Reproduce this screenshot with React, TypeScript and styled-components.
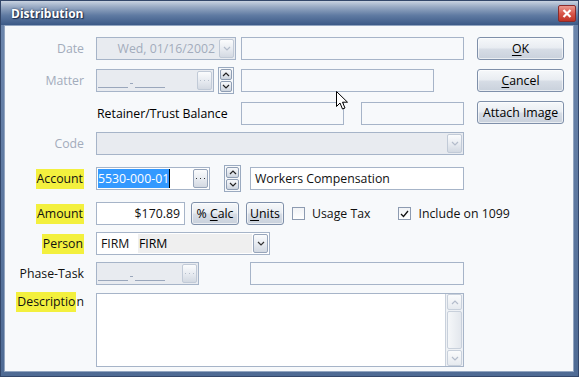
import styled, { createGlobalStyle } from "styled-components";

const GlobalStyle = createGlobalStyle`
  html, body {
    margin: 0;
    padding: 0;
    background: #ffffff;
  }
  body {
    font-family: "Open Sans", "Noto Sans", sans-serif;
    font-size: 12.3px;
    color: #000;
  }
`;

const Window = styled.div`
  position: relative;
  width: 579px;
  height: 377px;
  box-sizing: border-box;
  display: flex;
  flex-direction: column;
  background: linear-gradient(180deg, #6d87ad, #4f6b94);
  border: 1px solid #33476a;
  overflow: hidden;
`;

const TitleBar = styled.div`
  height: 24px;
  flex: none;
  display: flex;
  align-items: center;
  justify-content: space-between;
  padding: 0 2px 0 10px;
  background: linear-gradient(180deg, #c9d3e1 0%, #97a9c3 25%, #5f7aa2 60%, #3c5a87 100%);
`;

const Title = styled.span`
  font-weight: bold;
  font-size: 12px;
  color: #fff;
  text-shadow: 0 0 2px #1c2f4f, 1px 1px 1px #1c2f4f;
`;

const CloseBox = styled.div`
  width: 18px;
  height: 17px;
  box-sizing: border-box;
  margin-top: 1px;
  border: 1px solid #8a2b2b;
  border-radius: 2px;
  background: linear-gradient(180deg, #eb9a90 0%, #d8574b 50%, #bf3326 100%);
  display: flex;
  align-items: center;
  justify-content: center;
`;

const Client = styled.div`
  flex: 1;
  margin: 0 4px 4px 3px;
  border: 1px solid #92a5c0;
  background: #f7f9fb;
  display: flex;
  padding-top: 11px;
`;

const Form = styled.div`
  width: 459px;
  display: flex;
  flex-direction: column;
`;

const Row = styled.div<{ $mt?: number; $h?: number }>`
  display: flex;
  align-items: center;
  height: ${(p) => p.$h ?? 23}px;
  margin-top: ${(p) => p.$mt ?? 0}px;
`;

const TopRow = styled(Row)`
  align-items: flex-start;
`;

const Label = styled.div<{ $off?: boolean }>`
  width: 79px;
  flex: none;
  margin-right: 12px;
  text-align: right;
  white-space: nowrap;
  color: ${(p) => (p.$off ? "#a3acbc" : "#111")};
`;

const Mark = styled.span`
  background: #f3f03e;
  padding: 1px 1px 2px;
`;

const Caption = styled.span`
  margin-left: 1px;
  width: 144px;
  white-space: nowrap;
`;

type Look = "off" | "plain" | "white";

const Field = styled.div<{ $w: number; $ml?: number; $look?: Look; $h?: number }>`
  width: ${(p) => p.$w}px;
  height: ${(p) => p.$h ?? 23}px;
  margin-left: ${(p) => p.$ml ?? 0}px;
  flex: none;
  box-sizing: border-box;
  border: 1px solid #a6b4c8;
  background: ${(p) =>
    p.$look === "off" ? "#e8ebf0" : p.$look === "white" ? "#ffffff" : "#f7f9fb"};
  display: flex;
  align-items: center;
  position: relative;
  overflow: hidden;
`;

const FieldText = styled.span<{ $right?: boolean; $off?: boolean; $w?: number }>`
  flex: ${(p) => (p.$w ? "none" : "1")};
  width: ${(p) => (p.$w ? `${p.$w}px` : "auto")};
  box-sizing: border-box;
  padding: 0 4px;
  white-space: nowrap;
  text-align: ${(p) => (p.$right ? "right" : "left")};
  color: ${(p) => (p.$off ? "#a3acbc" : "#111")};
`;

// "_____-_____" placeholder of a masked code field
const Blank = styled.span`
  flex: 1;
  display: flex;
  align-items: flex-end;
  gap: 2px;
  padding: 0 0 3px 1px;
  align-self: stretch;
  box-sizing: border-box;
`;

const BlankLine = styled.span`
  flex: none;
  width: 30px;
  border-bottom: 1px solid #9aa7bc;
`;

const BlankDash = styled.span`
  flex: none;
  width: 3px;
  margin-bottom: 4px;
  border-bottom: 1px solid #9aa7bc;
`;

const Selected = styled.span`
  margin-left: 1px;
  padding: 1px 0;
  background: #3399ff;
  color: #fff;
  border-right: 1px solid #000;
`;

const MiniBtn = styled.div<{ $off?: boolean }>`
  width: 15px;
  height: 19px;
  flex: none;
  margin: 0 1px 0 auto;
  box-sizing: border-box;
  border: 1px solid ${(p) => (p.$off ? "#c1cad7" : "#97a5ba")};
  border-radius: 2px;
  background: linear-gradient(180deg, #fbfcfd 0%, #e6eaf0 55%, #d3d9e2 100%);
  display: flex;
  align-items: center;
  justify-content: center;
`;

const GreyPart = styled.div`
  flex: 1;
  align-self: stretch;
  margin: 1px 1px 1px 0;
  background: #efefef;
  display: flex;
  align-items: center;
  padding-left: 1px;
`;

const Spin = styled.div<{ $w: number; $ml: number }>`
  width: ${(p) => p.$w}px;
  height: 27px;
  margin-left: ${(p) => p.$ml}px;
  flex: none;
  box-sizing: border-box;
  border: 1px solid #9aaac0;
  padding: 1px;
  display: flex;
  flex-direction: column;
  gap: 1px;
`;

const SpinBtn = styled.div`
  flex: 1;
  border: 1px solid #8e9db3;
  border-radius: 2px;
  background: linear-gradient(180deg, #f8f9fb 0%, #dfe4eb 60%, #cdd4de 100%);
  display: flex;
  align-items: center;
  justify-content: center;
`;

const Btn = styled.div<{ $w: number; $ml?: number }>`
  width: ${(p) => p.$w}px;
  height: 23px;
  margin-left: ${(p) => p.$ml ?? 0}px;
  flex: none;
  box-sizing: border-box;
  border: 1px solid #7f90aa;
  border-radius: 3px;
  background: linear-gradient(180deg, #f6f8fa 0%, #e9edf2 45%, #d6dce5 55%, #c9d1dc 100%);
  box-shadow: inset 0 0 0 1px rgba(255, 255, 255, 0.6);
  display: flex;
  align-items: center;
  justify-content: center;
  color: #000;
  white-space: nowrap;
  u {
    text-decoration-thickness: 1px;
    text-underline-offset: 2px;
  }
`;

const Side = styled.div`
  margin-left: 13px;
  display: flex;
  flex-direction: column;
  gap: 9px;
`;

const Check = styled.label<{ $ml: number }>`
  display: flex;
  align-items: center;
  gap: 7px;
  margin-left: ${(p) => p.$ml}px;
  white-space: nowrap;
  color: #111;
`;

const Box = styled.span`
  width: 13px;
  height: 13px;
  box-sizing: border-box;
  border: 1px solid #8d9bb1;
  background: linear-gradient(180deg, #f1f3f6, #ffffff);
  display: flex;
  align-items: center;
  justify-content: center;
`;

const Scroll = styled.div`
  width: 17px;
  margin-left: auto;
  align-self: stretch;
  display: flex;
  flex-direction: column;
  background: #eef1f5;
  border-left: 1px solid #c9d1dc;
`;

const ScrollBtn = styled.div`
  height: 16px;
  box-sizing: border-box;
  margin: 0 1px;
  border: 1px solid #c8d0db;
  border-radius: 2px;
  background: linear-gradient(180deg, #fafbfc, #e6eaef);
  display: flex;
  align-items: center;
  justify-content: center;
`;

const Thumb = styled.div`
  flex: 1;
  margin: 1px 1px;
  border: 1px solid #c8d0db;
  border-radius: 2px;
  background: linear-gradient(90deg, #f5f7f9, #e3e7ed);
`;

const Pointer = styled.svg`
  position: absolute;
  left: 335px;
  top: 90px;
`;

function Chevron({ up, color = "#333" }: { up?: boolean; color?: string }) {
  return (
    <svg width="8" height="5" viewBox="0 0 8 5">
      <polyline
        points={up ? "1,4 4,1 7,4" : "1,1 4,4 7,1"}
        fill="none"
        stroke={color}
        strokeWidth="1.2"
      />
    </svg>
  );
}

function Dots({ color }: { color: string }) {
  return (
    <svg width="9" height="3" viewBox="0 0 9 3">
      <rect x="0" y="1" width="1" height="1" fill={color} />
      <rect x="4" y="1" width="1" height="1" fill={color} />
      <rect x="8" y="1" width="1" height="1" fill={color} />
    </svg>
  );
}

function Spinner({ w, ml }: { w: number; ml: number }) {
  return (
    <Spin $w={w} $ml={ml}>
      <SpinBtn>
        <Chevron up color="#222" />
      </SpinBtn>
      <SpinBtn>
        <Chevron color="#222" />
      </SpinBtn>
    </Spin>
  );
}

function MaskBlank() {
  return (
    <Blank>
      <BlankLine />
      <BlankDash />
      <BlankLine />
    </Blank>
  );
}

export default function App() {
  return (
    <>
      <GlobalStyle />
      <Window>
        <TitleBar>
          <Title>Distribution</Title>
          <CloseBox>
            <svg width="10" height="9" viewBox="0 0 10 9">
              <path d="M1.5 1 L8.5 8 M8.5 1 L1.5 8" stroke="#fff" strokeWidth="2.2" />
            </svg>
          </CloseBox>
        </TitleBar>
        <Client>
          <Form>
            <Row>
              <Label $off>Date</Label>
              <Field $w={140} $look="off">
                <FieldText $right $off>
                  Wed, 01/16/2002
                </FieldText>
                <MiniBtn $off>
                  <Chevron color="#b3bccb" />
                </MiniBtn>
              </Field>
              <Field $w={223} $ml={5} />
            </Row>
            <Row $mt={9}>
              <Label $off>Matter</Label>
              <Field $w={118} $look="off">
                <MaskBlank />
                <MiniBtn $off>
                  <Dots color="#b6bfcc" />
                </MiniBtn>
              </Field>
              <Spinner w={16} ml={4} />
              <Field $w={193} $ml={7} />
            </Row>
            <Row $mt={10}>
              <Label />
              <Caption>Retainer/Trust Balance</Caption>
              <Field $w={103} />
              <Field $w={103} $ml={17} />
            </Row>
            <Row $mt={7}>
              <Label $off>Code</Label>
              <Field $w={368} $look="off">
                <MiniBtn $off>
                  <Chevron color="#b3bccb" />
                </MiniBtn>
              </Field>
            </Row>
            <Row $mt={12}>
              <Label>
                <Mark>Account</Mark>
              </Label>
              <Field $w={114} $look="white">
                <Selected>5530-000-01</Selected>
                <MiniBtn>
                  <Dots color="#333" />
                </MiniBtn>
              </Field>
              <Spinner w={17} ml={14} />
              <Field $w={214} $ml={9} $look="white">
                <FieldText>Workers Compensation</FieldText>
              </Field>
            </Row>
            <Row $mt={12}>
              <Label>
                <Mark>Amount</Mark>
              </Label>
              <Field $w={89} $look="white">
                <FieldText $right>$170.89</FieldText>
              </Field>
              <Btn $w={48} $ml={6}>
                %&nbsp;<u>C</u>alc
              </Btn>
              <Btn $w={38} $ml={7}>
                <u>U</u>nits
              </Btn>
              <Check $ml={8}>
                <Box />
                Usage Tax
              </Check>
              <Check $ml={28}>
                <Box>
                  <svg width="9" height="8" viewBox="0 0 9 8">
                    <polyline points="1,4 3.5,6.5 8,1" fill="none" stroke="#111" strokeWidth="1.3" />
                  </svg>
                </Box>
                Include on 1099
              </Check>
            </Row>
            <Row $mt={7}>
              <Label>
                <Mark>Person</Mark>
              </Label>
              <Field $w={174} $look="white">
                <FieldText $w={41}>FIRM</FieldText>
                <GreyPart>FIRM</GreyPart>
                <MiniBtn>
                  <Chevron />
                </MiniBtn>
              </Field>
            </Row>
            <Row $mt={7}>
              <Label>Phase-Task</Label>
              <Field $w={103} $look="off">
                <MaskBlank />
                <MiniBtn $off>
                  <Dots color="#b6bfcc" />
                </MiniBtn>
              </Field>
              <Field $w={214} $ml={51} />
            </Row>
            <TopRow $mt={8} $h={74}>
              <Label>
                <Mark>Descriptio</Mark>n
              </Label>
              <Field $w={368} $h={74} $look="white">
                <Scroll>
                  <ScrollBtn>
                    <Chevron up color="#b3bccb" />
                  </ScrollBtn>
                  <Thumb />
                  <ScrollBtn>
                    <Chevron color="#b3bccb" />
                  </ScrollBtn>
                </Scroll>
              </Field>
            </TopRow>
          </Form>
          <Side>
            <Btn $w={87}>
              <u>O</u>K
            </Btn>
            <Btn $w={87}>
              <u>C</u>ancel
            </Btn>
            <Btn $w={87}>Attach Image</Btn>
          </Side>
        </Client>
        <Pointer width="13" height="20" viewBox="0 0 13 20">
          <path
            d="M0.5 0.5 L0.5 15.5 L4 12 L6.5 18 L9 17 L6.5 11.2 L11.5 11.2 Z"
            fill="#fff"
            stroke="#000"
            strokeWidth="1"
            strokeLinejoin="round"
          />
        </Pointer>
      </Window>
    </>
  );
}
